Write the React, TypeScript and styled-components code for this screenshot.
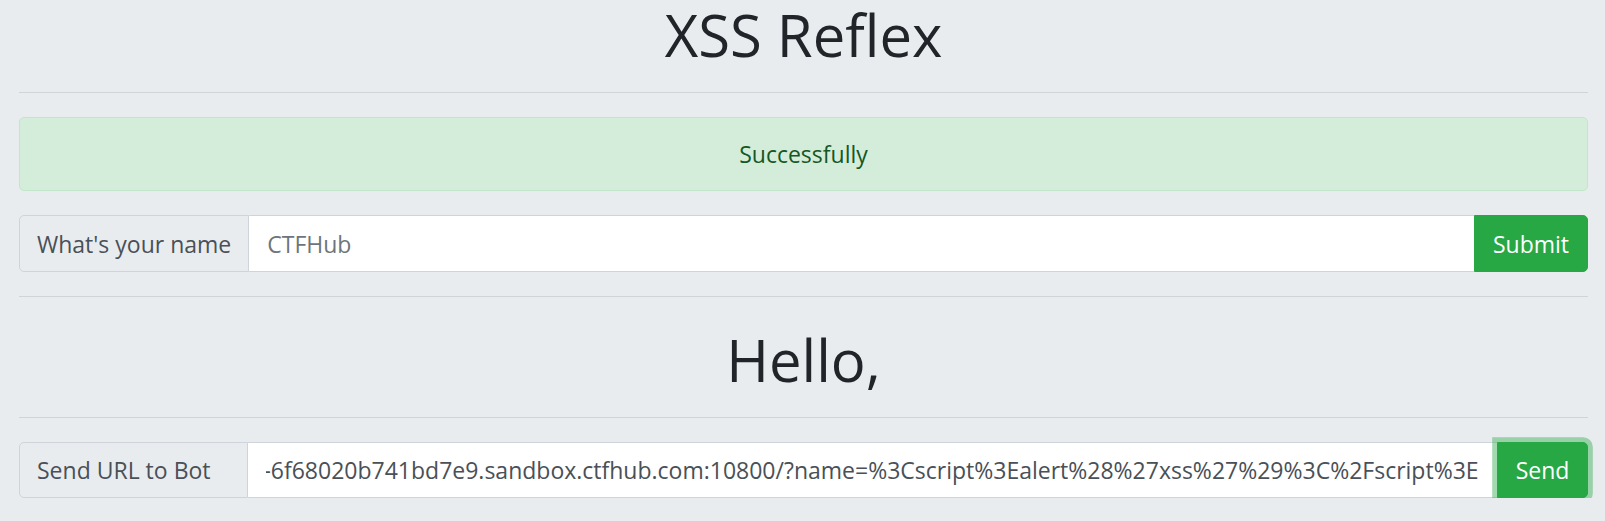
import React, { useEffect, useRef } from "react";
import styled, { createGlobalStyle } from "styled-components";

const Global = createGlobalStyle`
  html, body { margin: 0; padding: 0; background: #e9ecef; }
  body { font-family: "Open Sans", "Noto Sans", "Liberation Sans", sans-serif; color: #212529; }
  * { box-sizing: border-box; }
`;

const Page = styled.div`
  display: flex;
  flex-direction: column;
  padding: 0 17px 0 19px;
`;

const Heading = styled.h1<{ $lh: number; $mt: number; $mb: number }>`
  margin: ${(p) => p.$mt}px 0 ${(p) => p.$mb}px;
  font-size: 58px;
  font-weight: 400;
  line-height: ${(p) => p.$lh}px;
  text-align: center;
  color: #212529;
`;

const Rule = styled.hr`
  margin: 0 0 24px;
  border: 0;
  border-top: 1px solid rgba(0, 0, 0, 0.1);
  height: 0;
`;

const Alert = styled.div`
  margin-bottom: 24px;
  padding: 18px 24px;
  border: 1px solid #c3e6cb;
  border-radius: 5px;
  background: #d4edda;
  color: #155724;
  font-size: 23px;
  line-height: 36px;
  text-align: center;
`;

const InputGroup = styled.div<{ $h: number; $mb: number }>`
  display: flex;
  align-items: stretch;
  height: ${(p) => p.$h}px;
  margin-bottom: ${(p) => p.$mb}px;
`;

const Addon = styled.span`
  display: flex;
  align-items: center;
  flex: 0 0 229px;
  padding: 0 17px;
  background: #e9ecef;
  border: 1px solid #ced4da;
  border-radius: 5px 0 0 5px;
  color: #495057;
  font-size: 23px;
  white-space: nowrap;
`;

const Field = styled.input`
  flex: 1 1 auto;
  min-width: 0;
  padding: 0 18px;
  border: 1px solid #ced4da;
  border-left: 0;
  border-right: 0;
  border-radius: 0;
  background: #fff;
  color: #495057;
  font-family: inherit;
  font-size: 23px;
  outline: none;
  &::placeholder { color: #6c757d; opacity: 1; }
`;

const Button = styled.button<{ $w: number; $focus?: boolean }>`
  flex: 0 0 ${(p) => p.$w}px;
  position: relative;
  border: 1px solid #28a745;
  border-radius: 0 5px 5px 0;
  background: #28a745;
  color: #fff;
  font-family: inherit;
  font-size: 23px;
  cursor: pointer;
  box-shadow: ${(p) => (p.$focus ? "0 0 0 4.8px rgba(72, 180, 97, 0.5)" : "none")};
`;

const URL =
  "http://challenge-6f68020b741bd7e9.sandbox.ctfhub.com:10800/?name=%3Cscript%3Ealert%28%27xss%27%29%3C%2Fscript%3E";

export default function App() {
  const urlRef = useRef<HTMLInputElement>(null);
  useEffect(() => {
    const el = urlRef.current;
    if (el) el.scrollLeft = el.scrollWidth;
  }, []);
  return (
    <>
      <Global />
      <Page>
        <Heading $lh={69} $mt={0} $mb={23}>XSS Reflex</Heading>
        <Rule />
        <Alert>Successfully</Alert>
        <InputGroup $h={57} $mb={24}>
          <Addon>What's your name</Addon>
          <Field placeholder="CTFHub" />
          <Button $w={114}>Submit</Button>
        </InputGroup>
        <Rule />
        <Heading $lh={77} $mt={0} $mb={19}>Hello,</Heading>
        <Rule />
        <InputGroup $h={56} $mb={0}>
          <Addon>Send URL to Bot</Addon>
          <Field ref={urlRef} defaultValue={URL} />
          <Button $w={91} $focus>Send</Button>
        </InputGroup>
      </Page>
    </>
  );
}
